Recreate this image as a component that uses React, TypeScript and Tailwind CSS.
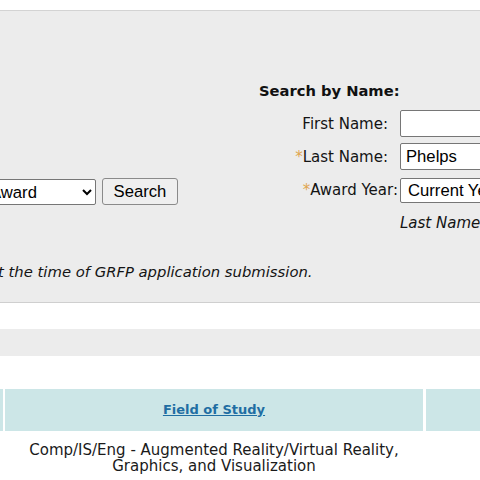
import React from "react";

const ctl = "font-['Liberation_Sans',Arial,sans-serif] text-[16.67px] text-black";

export default function App() {
  return (
    <div className="w-[480px] h-[480px] overflow-hidden bg-white font-['DejaVu_Sans',Verdana,sans-serif] text-[#141414]">
      <div className="h-[10px]" />
      <div className="bg-[#ececec] border-t border-[#d3d3d3] border-b border-b-[#cfcfcf] pt-[71px] pb-[21px]">
        <div className="flex">
          <div className="w-[259px] shrink-0 pt-[96px]">
            <div className="flex items-start ml-[-17px]">
              <select
                defaultValue="award"
                className={`${ctl} w-[113px] h-[26px] mt-[1px] bg-white border border-[#767676] rounded-[2px] pl-[2px]`}
              >
                <option value="award">Award</option>
              </select>
              <button className={`${ctl} ml-[6px] w-[76px] h-[27px] bg-[#efefef] border border-[#8a8a8a] rounded-[3px]`}>
                Search
              </button>
            </div>
          </div>
          <div className="flex-1 min-w-0">
            <div className="h-[18px] leading-[18px] text-[14.7px] font-bold text-[#111] whitespace-nowrap">Search by Name:</div>
            <div className="mt-[10px] grid grid-cols-[129px_1fr] text-[15px] whitespace-nowrap">
              <div className="h-[27px] flex items-center justify-end pt-[1px]">First Name:</div>
              <div className="pl-[12px] h-[27px]">
                <input className={`${ctl} w-[200px] h-[27px] bg-white border border-[#767676] rounded-[2px] px-[5px]`} />
              </div>
              <div className="mt-[6px] h-[27px] flex items-center justify-end pt-[1px]">
                <span className="text-[#e0a54e]">*</span>Last Name:
              </div>
              <div className="mt-[6px] pl-[12px] h-[27px]">
                <input defaultValue="Phelps" className={`${ctl} w-[200px] h-[27px] bg-white border border-[#767676] rounded-[2px] px-[5px]`} />
              </div>
              <div className="mt-[8px] h-[25px] flex items-center justify-end pr-[1px] mr-[-11px]">
                <span className="text-[#e0a54e]">*</span>Award Year:
              </div>
              <div className="mt-[8px] pl-[12px] h-[25px]">
                <select
                  defaultValue="cur"
                  className={`${ctl} w-[200px] h-[25px] bg-white border border-[#767676] rounded-[2px] pl-[3px]`}
                >
                  <option value="cur">Current Year</option>
                </select>
              </div>
            </div>
            <div className="mt-[11px] pl-[141px] h-[18px] leading-[18px] text-[15px] italic whitespace-nowrap">Last Name is required</div>
          </div>
        </div>
        <p className="mt-[31px] ml-[-11px] h-[18px] leading-[18px] text-[14.8px] italic whitespace-nowrap">
          at the time of GRFP application submission.
        </p>
      </div>
      <div className="h-[26px]" />
      <div className="h-[27px] bg-[#ececec]" />
      <div className="h-[33px]" />
      <div className="flex gap-[2px] h-[42px]">
        <div className="w-[3px] shrink-0 bg-[#cce6e7]" />
        <div className="w-[418px] shrink-0 bg-[#cce6e7] flex items-center justify-center">
          <a href="#" className="text-[13px] font-bold text-[#1f6ea3] underline">Field of Study</a>
        </div>
        <div className="flex-1 bg-[#cce6e7] ml-[1px]" />
      </div>
      <div className="flex">
        <div className="w-[5px] shrink-0" />
        <div className="w-[418px] shrink-0 pt-[11px] text-center text-[15px] leading-[16px] text-[#1a1a1a]">
          Comp/IS/Eng - Augmented Reality/Virtual Reality,
          <br />
          Graphics, and Visualization
        </div>
      </div>
    </div>
  );
}
